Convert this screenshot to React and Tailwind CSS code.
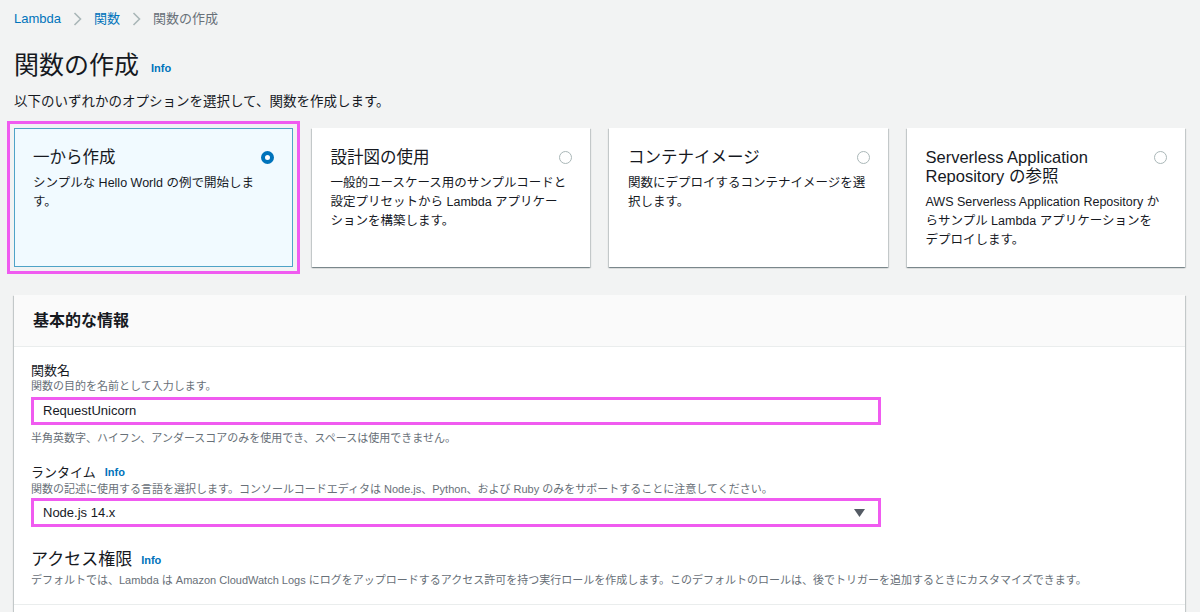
import React from "react";

const font = { fontFamily: '"Liberation Sans", "Noto Sans CJK JP", sans-serif' };

const options = [
  {
    id: "scratch",
    title: ["一から作成"],
    desc: ["シンプルな Hello World の例で開始しま", "す。"],
  },
  {
    id: "blueprint",
    title: ["設計図の使用"],
    desc: ["一般的ユースケース用のサンプルコードと", "設定プリセットから Lambda アプリケー", "ションを構築します。"],
  },
  {
    id: "container",
    title: ["コンテナイメージ"],
    desc: ["関数にデプロイするコンテナイメージを選", "択します。"],
  },
  {
    id: "sar",
    title: ["Serverless Application", "Repository の参照"],
    desc: ["AWS Serverless Application Repository か", "らサンプル Lambda アプリケーションを", "デプロイします。"],
  },
];

const Chevron = () => (
  <svg width="9" height="14" viewBox="0 0 9 14" className="mx-3">
    <path d="M1.5 1 L7.5 7 L1.5 13" fill="none" stroke="#aab7b8" strokeWidth="1.6" />
  </svg>
);

const Info = () => (
  <span className="ml-[9px] text-[11px] font-bold text-[#0073bb]">Info</span>
);

const Radio = ({ checked }) =>
  checked ? (
    <span className="mt-[3px] block h-[13px] w-[13px] shrink-0 rounded-full border-[4px] border-[#0073bb] bg-white" />
  ) : (
    <span className="mt-[3px] block h-[13px] w-[13px] shrink-0 rounded-full border border-[#aab7b8] bg-white" />
  );

const OptionCard = ({ option, selected }) => (
  <div
    className={
      selected
        ? "h-[139px] border border-[#4fa3c7] bg-[#f1faff] pl-[18px] pr-[18px] pt-[19px] outline-[3px] outline-[#f05bf0] outline-offset-[4px]"
        : "h-[139px] bg-white pl-[19px] pr-[18px] pt-[20px] shadow-[0_1px_1px_0_rgba(0,28,36,0.3),1px_1px_1px_0_rgba(0,28,36,0.15),-1px_1px_1px_0_rgba(0,28,36,0.15)]"
    }
  >
    <div className="flex items-start justify-between">
      <div className="text-[16.5px] leading-[19px] text-[#16191f]">
        {option.title.map((t) => (
          <div key={t} className="whitespace-nowrap">{t}</div>
        ))}
      </div>
      <Radio checked={selected} />
    </div>
    <div className="mt-[7px] text-[12.5px] leading-[19px] text-[#16191f]">
      {option.desc.map((d) => (
        <div key={d} className="whitespace-nowrap">{d}</div>
      ))}
    </div>
  </div>
);

export default function App() {
  return (
    <div style={font} className="h-[612px] overflow-hidden bg-[#f2f3f3] px-[14px] text-[#16191f]">
      {/* Breadcrumb */}
      <div className="flex items-center pt-[9px] text-[13px] leading-[20px]">
        <span className="text-[#0073bb]">Lambda</span>
        <Chevron />
        <span className="text-[#0073bb]">関数</span>
        <Chevron />
        <span className="text-[#687078]">関数の作成</span>
      </div>

      {/* Title */}
      <div className="mt-[18px] flex items-end">
        <h1 className="text-[25px] leading-[36px] font-normal">関数の作成</h1>
        <span className="mb-[4px] ml-[3px]">
          <Info />
        </span>
      </div>
      <p className="mt-[9px] text-[13.5px] leading-[20px]">
        以下のいずれかのオプションを選択して、関数を作成します。
      </p>

      {/* Option tiles */}
      <div className="mt-[16px] grid grid-cols-4 gap-[19px] pr-[1px]">
        {options.map((o) => (
          <OptionCard key={o.id} option={o} selected={o.id === "scratch"} />
        ))}
      </div>

      {/* Basic info panel */}
      <div className="mt-[28px] mr-[1px] bg-white shadow-[0_1px_1px_0_rgba(0,28,36,0.3),1px_1px_1px_0_rgba(0,28,36,0.15),-1px_1px_1px_0_rgba(0,28,36,0.15)]">
        <div className="flex h-[52px] items-center border-b border-[#eaeded] bg-[#fafafa] px-[19px]">
          <h2 className="text-[16px] font-bold">基本的な情報</h2>
        </div>
        <div className="px-[17px] pt-[15px]">
          <div className="text-[13px] leading-[17px]">関数名</div>
          <div className="text-[11px] leading-[14px] text-[#687078]">関数の目的を名前として入力します。</div>
          <div className="mt-[4px] flex h-[28px] w-[850px] items-center border-[3px] border-[#f05bf0] bg-white px-[9px] text-[13px]">
            RequestUnicorn
          </div>
          <div className="mt-[6px] text-[11px] leading-[14px] text-[#687078]">
            半角英数字、ハイフン、アンダースコアのみを使用でき、スペースは使用できません。
          </div>

          <div className="mt-[19px] flex items-center text-[13px] leading-[17px]">
            ランタイム
            <Info />
          </div>
          <div className="mt-[1px] text-[11px] leading-[14px] text-[#687078]">
            関数の記述に使用する言語を選択します。コンソールコードエディタは Node.js、Python、および Ruby のみをサポートすることに注意してください。
          </div>
          <div className="mt-[2px] flex h-[29px] w-[850px] items-center justify-between border-[3px] border-[#f05bf0] bg-white pl-[9px] pr-[13px] text-[13px]">
            <span>Node.js 14.x</span>
            <svg width="11" height="8" viewBox="0 0 11 8">
              <path d="M0 0 H11 L5.5 8 Z" fill="#545b64" />
            </svg>
          </div>

          <div className="mt-[22px] flex items-center text-[17px] leading-[22px]">
            アクセス権限
            <Info />
          </div>
          <div className="mt-[2px] pb-[17px] text-[11px] leading-[14px] text-[#687078]">
            デフォルトでは、Lambda は Amazon CloudWatch Logs にログをアップロードするアクセス許可を持つ実行ロールを作成します。このデフォルトのロールは、後でトリガーを追加するときにカスタマイズできます。
          </div>
        </div>
        <div className="h-[40px] border-t border-[#eaeded]" />
      </div>
    </div>
  );
}
